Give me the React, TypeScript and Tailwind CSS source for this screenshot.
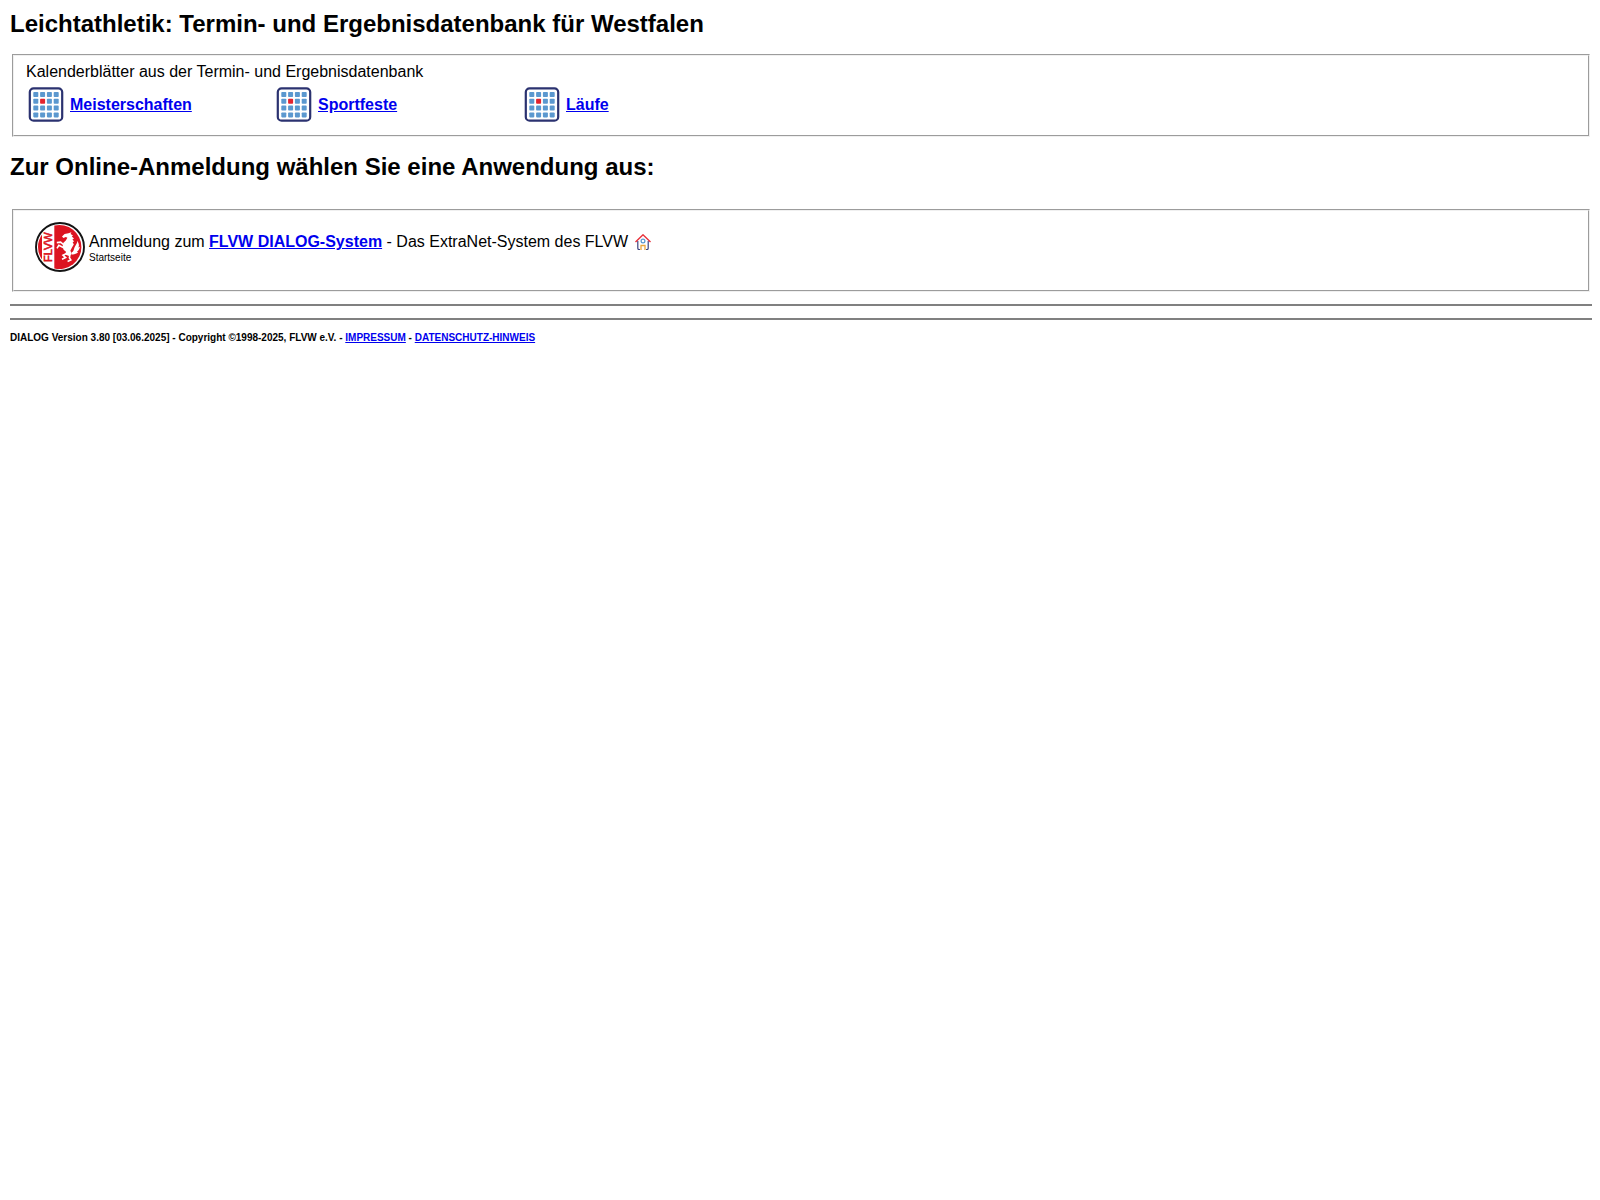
import type { ReactNode } from 'react';

const CALENDARS = [
    { label: 'Meisterschaften', href: '#meisterschaften' },
    { label: 'Sportfeste', href: '#sportfeste' },
    { label: 'Läufe', href: '#laeufe' },
];

const CELLS = [0, 1, 2, 3];

function CalendarIcon() {
    return (
        <svg width="36" height="36" viewBox="-1 -0.5 36 36" className="shrink-0" aria-hidden="true">
            <rect x="0.8" y="0.8" width="32.4" height="32.4" rx="3.8" fill="#fff" stroke="#2b3270" strokeWidth="2.2" />
            {CELLS.map((row) =>
                CELLS.map((col) => (
                    <rect
                        key={`${row}-${col}`}
                        x={4.3 + col * 6.8}
                        y={4.5 + row * 6.8}
                        width="5"
                        height="5"
                        rx="0.8"
                        fill={row === 1 && col === 1 ? '#e3232e' : '#5b98cf'}
                    />
                )),
            )}
        </svg>
    );
}

function HouseIcon() {
    return (
        <svg width="16" height="16" viewBox="0 0 16 16" fill="none" aria-hidden="true">
            <path d="M2.8 7v7.2q0 1.3 1.3 1.3h.9M13.2 7v7.2q0 1.3-1.3 1.3H11" stroke="#3d4480" strokeWidth="1.2" />
            <path d="M.5 8 8 .8 15.5 8" stroke="#e8303a" strokeWidth="1.4" />
            <circle cx="8" cy="7" r="1.9" stroke="#5b98cf" strokeWidth="1.2" />
            <path d="M6 16v-4.5h4V16" stroke="#eda63c" strokeWidth="1.3" />
        </svg>
    );
}

function FlvwLogo() {
    return (
        <svg width="50" height="50" viewBox="0 0 50 50" className="shrink-0" role="img" aria-label="FLVW">
            <circle cx="25" cy="25" r="24" fill="#fff" stroke="#141414" strokeWidth="1.9" />
            <path d="M19.3 3.6A22 22 0 1 1 19.3 46.4Z" fill="#dc1421" />
            <path d="M7 12.5v25A21.5 21.5 0 0 1 7 12.5Z" fill="#dc1421" />
            <text
                transform="translate(17.4 40) rotate(-90)"
                fontFamily="Liberation Sans, Arial, sans-serif"
                fontSize="11"
                fill="#dc1421"
                stroke="#dc1421"
                strokeWidth="0.6"
            >
                FLVW
            </text>
            {/* rearing horse: head and body, then legs, then tail */}
            <path
                d="M36.4 10.2 35.6 12 38 13.6 36.8 14.6 39 16.6 37.4 17.4 39.2 19.6 37.6 20 38.8 22.4 37 25.6 35.4 28.6 36.6 32 34 34 30.2 32.4 31 29.8 28.6 27.8 27.6 24.8 28.2 21 30.8 18.4 32.4 15.8 30.8 14.9 28.4 16 27 14.6 29.6 12 33.4 11.2Z"
                fill="#fff"
            />
            <path
                d="M29 23 25.6 20.2 21.8 20.6M28.8 25.8 23.8 23.4 22 26.4M31.6 31.4 28 33.2 30.6 35.6 27 37.2M35.2 31 34.4 35.8 35.8 38 32.6 39.4"
                fill="none"
                stroke="#fff"
                strokeWidth="1.6"
            />
            <path
                d="M36.4 30.6C39.2 29.6 38.6 26.4 40.4 23.8 41.4 22 42.4 20.8 42.6 18.8 43.2 21.2 44.8 23 43.4 25.4L45 24.8C44.4 27.2 43.8 28.4 42 29.6L43 30.6C41.2 31.8 39.4 32.8 36.6 32.4Z"
                fill="#fff"
            />
        </svg>
    );
}

function TextLink({ href, children }: { href: string; children: ReactNode }) {
    return (
        <a href={href} className="font-bold text-[#0000ee] underline">
            {children}
        </a>
    );
}

function Panel({ children }: { children: ReactNode }) {
    return (
        <div className="mx-[2px] min-h-[83px] border-2 border-[#f0f0f0] [border-style:groove] px-3">
            {children}
        </div>
    );
}

export default function App() {
    return (
        <main className="py-[10px] pr-2 pl-[10px] font-['Liberation_Sans',Arial,sans-serif] text-base leading-[18px] text-black">
            <h1 className="text-2xl leading-7 font-bold">
                Leichtathletik: Termin- und Ergebnisdatenbank für Westfalen
            </h1>

            <section className="mt-4">
                <Panel>
                    <p className="pt-[7px]">Kalenderblätter aus der Termin- und Ergebnisdatenbank</p>
                    <ul className="flex flex-wrap pt-[6px] pl-[2px]">
                        {CALENDARS.map(({ label, href }) => (
                            <li key={label} className="flex w-[248px] items-center gap-[6px]">
                                <CalendarIcon />
                                <TextLink href={href}>{label}</TextLink>
                            </li>
                        ))}
                    </ul>
                </Panel>
            </section>

            <h2 className="mt-4 text-2xl leading-7 font-bold">
                Zur Online-Anmeldung wählen Sie eine Anwendung aus:
            </h2>

            <section className="mt-7">
                <Panel>
                    <div className="flex gap-1 pt-[11px] pl-[9px]">
                        <FlvwLogo />
                        <div className="pt-[11px]">
                            <p className="flex items-center gap-[7px]">
                                <span>
                                    Anmeldung zum <TextLink href="#dialog">FLVW DIALOG-System</TextLink> - Das
                                    ExtraNet-System des FLVW
                                </span>
                                <a href="#startseite" aria-label="Startseite">
                                    <HouseIcon />
                                </a>
                            </p>
                            <p className="text-[10px] leading-[14px]">Startseite</p>
                        </div>
                    </div>
                </Panel>
            </section>

            <hr className="mt-3 border-t-2 border-[#808080]" />
            <hr className="mt-3 border-t-2 border-[#808080]" />

            <footer className="mt-3 text-[10px] leading-3 font-bold">
                DIALOG Version 3.80 [03.06.2025] - Copyright ©1998-2025, FLVW e.V. -{' '}
                <TextLink href="#impressum">IMPRESSUM</TextLink> -{' '}
                <TextLink href="#datenschutz">DATENSCHUTZ-HINWEIS</TextLink>
            </footer>
        </main>
    );
}
